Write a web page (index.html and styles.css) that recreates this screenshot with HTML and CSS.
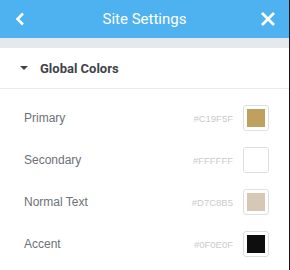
FILE: index.html
```html
<!DOCTYPE html>
<html lang="en">
<head>
  <meta charset="UTF-8" />
  <title>Site Settings</title>
  <link rel="stylesheet" href="styles.css">
</head>
<body>
  <div class="panel">
    <div class="header">
      <svg class="icon" width="12" height="14" viewBox="0 0 12 14">
        <path d="M9 1.5 L3.5 7 L9 12.5" fill="none" stroke="#fff" stroke-width="2.6" />
      </svg>
      <div class="header-title">Site Settings</div>
      <svg class="icon" width="16" height="16" viewBox="0 0 16 16">
        <path d="M2 2 L14 14 M14 2 L2 14" fill="none" stroke="#fff" stroke-width="2.8" />
      </svg>
    </div>
    <div class="band"></div>

    <div class="section-head">
      <span class="caret"></span>
      Global Colors
    </div>

    <div class="color-list">
      <div class="color-row">
        <span class="label">Primary</span>
        <span class="hex">#C19F5F</span>
        <span class="swatch"><span class="fill" style="background:#c19f5f"></span></span>
      </div>
      <div class="color-row">
        <span class="label">Secondary</span>
        <span class="hex">#FFFFFF</span>
        <span class="swatch"><span class="fill" style="background:#ffffff"></span></span>
      </div>
      <div class="color-row">
        <span class="label">Normal Text</span>
        <span class="hex">#D7C8B5</span>
        <span class="swatch"><span class="fill" style="background:#d7c8b5"></span></span>
      </div>
      <div class="color-row">
        <span class="label">Accent</span>
        <span class="hex">#0F0E0F</span>
        <span class="swatch"><span class="fill" style="background:#0f0e0f"></span></span>
      </div>
    </div>
  </div>
</body>
</html>
```

FILE: styles.css
```css
:root {
  --blue: #4eb2f0;
  --band: #e6e9ec;
  --line: #e9ebee;
  --label: #6d7178;
  --hex: #c9cbce;
}

body {
  margin: 0;
  font-family: Roboto, "Liberation Sans", sans-serif;
  background: #fff;
}

.panel {
  width: 289px;
  height: 270px;
  border-right: 1px solid #151515;
  overflow: hidden;
}

.header {
  height: 38px;
  background: var(--blue);
  display: flex;
  align-items: center;
  justify-content: space-between;
  padding: 0 13px 0 14px;
}

.header-title {
  color: #fff;
  font-size: 15px;
  margin-left: 3px;
}

.icon {
  display: block;
}

.band {
  height: 10px;
  background: var(--band);
}

.section-head {
  height: 40px;
  display: flex;
  align-items: center;
  gap: 12px;
  padding-left: 20px;
  border-bottom: 1px solid var(--line);
  font-size: 13px;
  font-weight: bold;
  color: #3f434a;
}

.caret {
  width: 0;
  height: 0;
  border-left: 4px solid transparent;
  border-right: 4px solid transparent;
  border-top: 4px solid #3f434a;
}

.color-list {
  padding-top: 8px;
}

.color-row {
  height: 42px;
  display: flex;
  align-items: center;
  padding: 0 20px 0 24px;
  font-family: "Liberation Sans", Arial, sans-serif;
}

.label {
  flex: 1;
  font-size: 12px;
  color: var(--label);
}

.hex {
  font-size: 9.5px;
  color: var(--hex);
  margin-right: 10px;
}

.swatch {
  width: 26px;
  height: 26px;
  box-sizing: border-box;
  border: 1px solid #dcdfe2;
  border-radius: 3px;
  padding: 3px;
  display: flex;
}

.fill {
  flex: 1;
}
```
